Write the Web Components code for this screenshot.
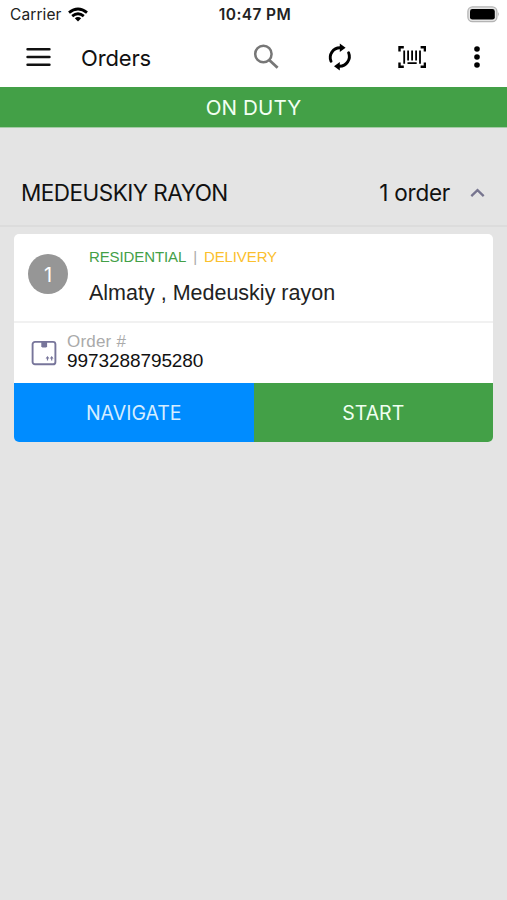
<!DOCTYPE html>
<html lang="en">
<head>
<meta charset="utf-8">
<title>Orders</title>
<style>
html,body{margin:0;height:100%}
body{background:#e4e4e4;font-family:Inter,"Liberation Sans",sans-serif;color:#111;overflow:hidden}
</style>
</head>
<body>
<orders-screen></orders-screen>
<script>
const define = (name, html) => customElements.define(name, class extends HTMLElement {
  constructor() {
    super();
    const t = document.createElement('template');
    t.innerHTML = html;
    this.attachShadow({mode: 'open'}).appendChild(t.content.cloneNode(true));
  }
});

define('status-bar', `<style>
:host{display:grid;grid-template-columns:1fr auto 1fr;align-items:center;height:29px;padding:0 7px 0 10px;box-sizing:border-box;background:#fff;color:#222}
.l{display:flex;align-items:center;gap:6px;font-size:15.5px;line-height:18px;letter-spacing:.1px}
.c{font-size:15.5px;line-height:18px;font-weight:600;letter-spacing:.4px}
.r{display:flex;justify-content:flex-end}
svg{display:block}
</style>
<div class="l"><span>Carrier</span><svg width="20" height="16" viewBox="0 0 20 16" fill="none" stroke="#000" stroke-width="2.8"><path d="M1 5.7Q10-1.8 19 5.7M4.2 9.2Q10 4.4 15.8 9.2"/><path d="M6.8 11.3Q10 8.7 13.2 11.3L10 14.6Z" fill="#000" stroke="none"/></svg></div>
<div class="c">10:47 PM</div>
<div class="r"><svg width="33" height="17" viewBox="0 0 33 17"><rect x=".9" y=".9" width="29" height="14.8" rx="4.6" fill="#e4e4e4" stroke="#b4b4b4" stroke-width="1.3"/><rect x="3" y="3" width="24.8" height="10.6" rx="2.4"/><path d="M31.2 6q1.8 2.2 0 4.4z" fill="#aaa"/></svg></div>`);

define('app-bar', `<style>
:host{display:flex;align-items:center;height:58px;padding:0 27px 2px 26px;box-sizing:border-box;background:#fff}
h1{flex:1;margin:1px 0 0 30px;font:400 22px/28px Inter,sans-serif;letter-spacing:-.15px}
svg{display:block}
.icons{display:flex;align-items:center}
</style>
<svg width="25" height="20" viewBox="0 0 25 20" stroke="#111" stroke-width="2.6" stroke-linecap="round"><path d="M1.6 2.2h21.8M1.6 10h21.8M1.6 17.8h21.8"/></svg>
<h1>Orders</h1>
<div class="icons">
<svg width="26" height="26" viewBox="0 0 26 26" fill="none" stroke="#777" style="margin-right:48px"><circle cx="10.4" cy="10" r="8.2" stroke-width="2.5"/><path d="M16.2 16L24.6 23.8" stroke-width="2.8"/></svg>
<svg width="26" height="28" viewBox="0 0 26 28" style="margin-right:45px"><g fill="none" stroke="#000" stroke-width="2.9" stroke-linecap="round"><path d="M4 18.2A9.7 9.7 0 0 1 13 4.8"/><path d="M21.6 9.8A9.7 9.7 0 0 1 12.6 23.2"/></g><path d="M12.8 .5L18.6 4.8L12.8 9.1ZM12.8 18.9L7 23.2L12.8 27.5Z"/></svg>
<svg width="28" height="22" viewBox="0 0 28 22" fill="none" stroke="#000" stroke-width="2.4" style="margin-right:48px"><path d="M1.5 5.4V1.3H5.8M22.6 1.3h4.3V5.4M26.9 16.6v4.1H22.6M5.8 20.7H1.5V16.6"/><path stroke-width="1.8" d="M6.2 4.5v13.2M10.1 4.5v10M14.1 4.5v10M18.1 4.5v10M22 4.5v13.2M9.5 17.2h9.2"/></svg>
<svg width="6" height="24" viewBox="0 0 6 24"><circle cx="3" cy="4" r="2.8"/><circle cx="3" cy="12" r="2.8"/><circle cx="3" cy="20" r="2.8"/></svg>
</div>`);

define('duty-banner', `<style>
:host{display:flex;align-items:center;justify-content:center;height:41px;box-sizing:border-box;padding-top:1px;background:#43a047;color:#f2fff2;font-size:20.6px;line-height:24px;letter-spacing:.1px;border-bottom:1px solid #a5cba6}
</style><span><slot></slot></span>`);

define('area-header', `<style>
:host{display:flex;align-items:center;height:67px;padding:0 22px 0 21px;margin-top:32px;box-sizing:border-box;border-bottom:2px solid #dcdcdc;font-size:22.5px;line-height:28px}
.n{flex:1;letter-spacing:-.52px}
.o{margin-right:20px;letter-spacing:-.25px}
svg{display:block}
</style><span class="n"><slot></slot></span><span class="o"><slot name="count"></slot></span>
<svg width="15" height="10" viewBox="0 0 15 10" fill="none" stroke="#77758f" stroke-width="2.3"><path d="M1.3 8.2L7.5 2.2L13.7 8.2"/></svg>`);

define('action-button', `<style>
:host{display:flex;flex:1;align-items:center;justify-content:center;height:59px;box-sizing:border-box;padding-top:2px;background:var(--bg);color:var(--fg);font:19.5px/24px Inter,sans-serif}
</style><span><slot></slot></span>`);

define('order-card', `<style>
:host{display:block;margin:7px 14px 0;border-radius:5px;overflow:hidden;background:#fff;font-family:"Liberation Sans",sans-serif}
.top{display:flex;height:87px;padding-left:14px;border-bottom:2px solid #f1f1f1}
.num{width:40px;height:40px;margin:20px 21px 0 0;border-radius:50%;background:#969696;color:#fff;font:20px/42px Inter,sans-serif;text-align:center}
.tags{display:flex;margin-top:14px;font-size:15px;line-height:18px;white-space:pre;letter-spacing:-.11px}
.res{color:#43a047}.sep{color:#aaa;margin:0 7px}.del{color:#fbc02d}
.addr{margin-top:15px;font-size:21.5px;line-height:25px;color:#222}
.mid{display:flex;height:59.5px;padding-left:17px}
.mid svg{display:block;margin:17px 10px 0 0}
.lab{margin-top:10px;font-size:17px;line-height:18px;color:#aaa;letter-spacing:.2px}
.val{font-size:19px;line-height:20px;color:#111;letter-spacing:-.08px}
.act{display:flex}
</style>
<div class="top"><div class="num">1</div><div><div class="tags"><span class="res">RESIDENTIAL</span><span class="sep">|</span><span class="del">DELIVERY</span></div><div class="addr">Almaty , Medeuskiy rayon</div></div></div>
<div class="mid"><svg width="26" height="26" viewBox="0 0 26 26"><rect x="1.6" y="1.9" width="22.8" height="22.4" rx="2.4" fill="none" stroke="#77759a" stroke-width="1.9"/><path d="M10.3 2h5.8v4.6l-1 1h-3.8l-1-1z" fill="#77759a"/><path d="M14.6 18.4l1.9-2.4 1.9 2.4zM18.8 18.4l1.9-2.4 1.9 2.4zM15.9 18h1.2v2.6h-1.2zM20.1 18h1.2v2.6h-1.2z" fill="#77759a"/></svg>
<div><div class="lab">Order #</div><div class="val">9973288795280</div></div></div>
<div class="act"><action-button style="--bg:#008cff;--fg:#d5edff">NAVIGATE</action-button><action-button style="--bg:#43a047;--fg:#f0fff0">START</action-button></div>`);

define('orders-screen', `<style>:host{display:block;height:100%}</style>
<status-bar></status-bar><app-bar></app-bar><duty-banner>ON DUTY</duty-banner>
<area-header>MEDEUSKIY RAYON<span slot="count">1 order</span></area-header><order-card></order-card>`);
</script>
</body>
</html>
